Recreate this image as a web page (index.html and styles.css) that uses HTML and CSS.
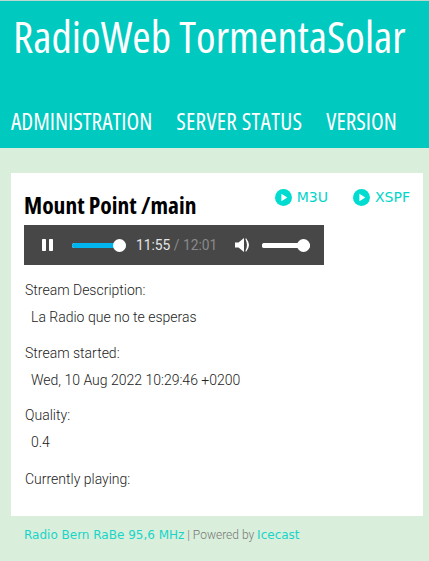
FILE: index.html
```html
<!DOCTYPE html>
<html lang="en">
<head>
<meta charset="utf-8">
<title>RadioWeb TormentaSolar</title>
<link rel="stylesheet" href="styles.css">
</head>
<body>
<header class="header">
  <h1 class="title">RadioWeb TormentaSolar</h1>
  <nav class="nav">
    <a class="nav-link" href="#">ADMINISTRATION</a>
    <a class="nav-link nav-status" href="#">SERVER STATUS</a>
    <a class="nav-link" href="#">VERSION</a>
  </nav>
</header>
<main class="card">
  <div class="card-head">
    <h2 class="mount">Mount Point /main</h2>
    <div class="playlists">
      <a class="pl-link" href="#"><svg class="pl-icon" viewBox="0 0 16 16"><circle cx="8" cy="8" r="8" fill="#00dcd0"/><path d="M6 4.4 L11.6 8 L6 11.6 Z" fill="#fff"/></svg>M3U</a>
      <a class="pl-link" href="#"><svg class="pl-icon" viewBox="0 0 16 16"><circle cx="8" cy="8" r="8" fill="#00dcd0"/><path d="M6 4.4 L11.6 8 L6 11.6 Z" fill="#fff"/></svg>XSPF</a>
    </div>
  </div>
  <div class="player">
    <svg class="pause" viewBox="0 0 11 12"><rect x="0" y="0" width="4" height="12" rx="0.8" fill="#fff"/><rect x="7" y="0" width="4" height="12" rx="0.8" fill="#fff"/></svg>
    <div class="slider seek"><span class="fill"></span><span class="knob"></span></div>
    <span class="time">11:55 <span class="time-total">/ 12:01</span></span>
    <svg class="speaker" viewBox="0 0 16 16"><path d="M0 5.5 H3.5 L9 1 V15 L3.5 10.5 H0 Z" fill="#fff"/><path d="M11 2 Q15.8 8 11 14 Q14 8 11 2 Z" fill="#fff" stroke="#fff" stroke-width="1.1" stroke-linejoin="round"/></svg>
    <div class="slider volume"><span class="fill white"></span><span class="knob"></span></div>
  </div>
  <dl class="info">
    <dt class="label">Stream Description:</dt>
    <dd class="value">La Radio que no te esperas</dd>
    <dt class="label">Stream started:</dt>
    <dd class="value">Wed, 10 Aug 2022 10:29:46 +0200</dd>
    <dt class="label">Quality:</dt>
    <dd class="value">0.4</dd>
    <dt class="label">Currently playing:</dt>
    <dd class="value"></dd>
  </dl>
</main>
<footer class="footer"><a class="foot-link" href="#">Radio Bern RaBe 95,6 MHz</a> | Powered by <a class="foot-link" href="#">Icecast</a></footer>
</body>
</html>
```
FILE: styles.css
```css
* { box-sizing: border-box; }
html, body { margin: 0; padding: 0; }
body { background: #d9eedb; font-family: Roboto, sans-serif; font-weight: 300; color: #111; height: 561px; overflow: hidden; }
a { text-decoration: none; }
.header { background: #00c9c0; height: 148px; border-top: 1px solid #bcd8d0; color: #fff; padding: 0 11px; overflow: hidden; }
.title { margin: 6px 0 0 2px; font: 500 44.5px/58px "Open Sans", sans-serif; font-stretch: 75%; white-space: nowrap; }
.nav { display: flex; gap: 24px; margin-top: 41px; }
.nav-link { color: #fff; font: 500 23.3px/30px "Open Sans", sans-serif; font-stretch: 75%; white-space: nowrap; }
.nav-status { letter-spacing: 0.25px; }
.card { background: #fff; margin: 25px 6px 0 11px; height: 343px; padding: 13px 13px 0; }
.card-head { display: flex; justify-content: space-between; height: 39px; }
.mount { margin: 3px 0 0; font: 700 23.5px/32px "Open Sans", sans-serif; font-stretch: 75%; color: #000; white-space: nowrap; }
.playlists { display: flex; gap: 25px; margin: 3px 0 0; height: 17px; }
.pl-link { display: flex; align-items: center; gap: 5px; color: #00d5ca; font: 400 14px/17px "DejaVu Sans", sans-serif; }
.pl-icon { width: 17px; height: 17px; }
.player { display: flex; align-items: center; width: 300px; height: 40px; background: #474747; color: #fff; font: 400 13.8px Roboto, sans-serif; }
.pause { width: 11px; height: 12px; margin-left: 18px; }
.slider { position: relative; height: 5px; background: #fff; border-radius: 3px; }
.seek { width: 54px; margin-left: 19px; }
.volume { width: 48px; margin-left: 11px; }
.fill { display: block; height: 100%; border-radius: 3px; background: #00b4f0; }
.fill.white { background: #fff; }
.knob { position: absolute; right: 0; top: -4px; width: 13px; height: 13px; border-radius: 50%; background: #fff; }
.time { margin-left: 10px; color: #e6e6e6; white-space: nowrap; }
.time-total { color: #8a8a8a; }
.speaker { width: 16px; height: 16px; margin-left: 17.5px; }
.info { margin: 15px 0 0 1px; font-size: 14px; line-height: 20px; color: #222; }
.label { margin: 0; }
.label:last-of-type { padding-top: 1px; }
.value { margin: 7px 0 15.6px 6px; }
.footer { margin: 11px 0 0 24px; font: 300 12px/17px Roboto, sans-serif; color: #777; }
.foot-link { color: #18d5c8; font: 400 12px/17px "DejaVu Sans", sans-serif; }
```
